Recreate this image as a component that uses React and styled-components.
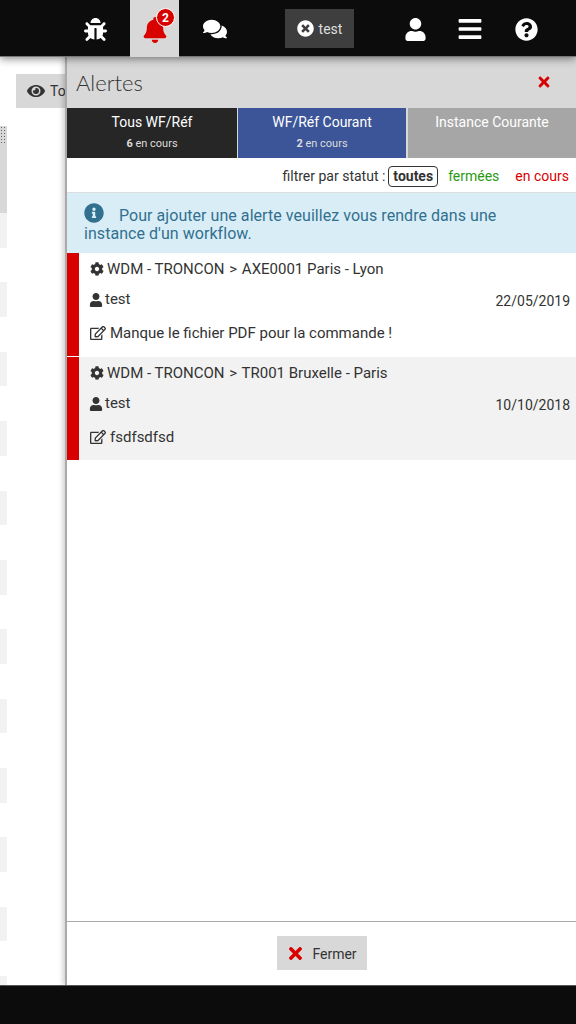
import styled, { createGlobalStyle } from "styled-components"
import { FaBars, FaBell, FaBug, FaCog, FaComments, FaEye, FaInfoCircle, FaQuestionCircle, FaRegEdit, FaTimes, FaTimesCircle, FaUser } from "react-icons/fa"

const GlobalStyle = createGlobalStyle`
  html, body {
    margin: 0;
    padding: 0;
    background: #fff;
    font-family: Roboto, "Liberation Sans", sans-serif;
    font-size: 14px;
    color: #333;
  }
  * { box-sizing: border-box; }
`

const Page = styled.div`
  width: 576px;
  height: 1024px;
  display: flex;
  flex-direction: column;
  overflow: hidden;
`
const TopBar = styled.header`
  height: 57px;
  flex: none;
  display: flex;
  padding-left: 60px;
  background: #0c0c0c;
  border-bottom: 1px solid #777;
  position: relative;
  z-index: 2;
  box-shadow: 0 2px 8px rgba(0, 0, 0, 0.45);
`
const NavItem = styled.div`
  width: ${(props) => props.$w}px;
  height: ${(props) => (props.$active ? 57 : 56)}px;
  display: flex;
  align-items: center;
  justify-content: center;
  position: relative;
  color: ${(props) => (props.$active ? "#d90000" : "#fff")};
  background: ${(props) => (props.$active ? "#d8d8d8" : "transparent")};
  font-size: ${(props) => props.$size || 23}px;
  padding-top: 2px;
`
const Badge = styled.span`
  position: absolute;
  top: 8px;
  left: 26px;
  width: 19px;
  height: 19px;
  border-radius: 50%;
  background: #d90000;
  border: 1px solid #fff;
  color: #fff;
  font-size: 12px;
  font-weight: 700;
  display: flex;
  align-items: center;
  justify-content: center;
`
const UserChip = styled.div`
  width: 69px;
  height: 39px;
  margin: 9px 31px 0 34px;
  display: flex;
  align-items: center;
  justify-content: center;
  gap: 5px;
  background: #3e3e3e;
  color: #ddd;
  font-size: 14px;
  svg { color: #fff; font-size: 17px; }
`
const Main = styled.main`
  flex: 1;
  position: relative;
  overflow: hidden;
`
const Behind = styled.div`
  padding-top: 17px;
`
const ViewButton = styled.div`
  width: 90px;
  height: 34px;
  margin-left: 16px;
  padding-left: 11px;
  display: flex;
  align-items: center;
  gap: 5px;
  background: #d8d8d8;
  font-size: 14px;
  svg { font-size: 18px; }
`
const TableHead = styled.div`
  width: 7px;
  height: 87px;
  margin-top: 18px;
  background: #d8d8d8;
`
const Grip = styled.div`
  height: 17px;
  background-image: radial-gradient(#666 0.9px, transparent 1px);
  background-size: 3px 3px;
`
const ZebraRow = styled.div`
  width: 7px;
  height: 34.7px;
  background: ${(props) => (props.$odd ? "#f2f2f2" : "#fff")};
`
const Drawer = styled.aside`
  position: absolute;
  top: 0;
  bottom: 0;
  left: 65px;
  right: 0;
  display: flex;
  flex-direction: column;
  background: #fff;
  border-left: 2px solid #aaa;
  box-shadow: -2px 0 5px rgba(0, 0, 0, 0.2);
`
const DrawerHeader = styled.div`
  height: 50px;
  flex: none;
  display: flex;
  align-items: center;
  justify-content: space-between;
  padding: 0 24px 0 9px;
  background: #d8d8d8;
  color: #d90000;
  font-size: 16px;
`
const DrawerTitle = styled.h1`
  margin: 0;
  font-family: Lato, sans-serif;
  font-size: 22px;
  font-weight: 300;
  color: #333;
`
const Tabs = styled.div`
  height: 51px;
  flex: none;
  display: grid;
  grid-template-columns: 170px 168px 1fr;
  column-gap: 1px;
  padding-top: 1px;
  background: #d8d8d8;
  & > :last-child { margin-left: 1px; }
`
const Tab = styled.div`
  height: 50px;
  padding-top: 6px;
  text-align: center;
  color: #fff;
  font-size: 14px;
  background: ${(props) => props.$bg};
`
const TabCount = styled.div`
  margin-top: 7px;
  font-size: 11px;
  line-height: 14px;
  color: #ddd;
  b { font-weight: 700; }
`
const FilterRow = styled.div`
  height: 35px;
  flex: none;
  display: flex;
  align-items: center;
  justify-content: flex-end;
  padding: 2px 2px 0 0;
  border-bottom: 1px solid #ddd;
`
const FilterLabel = styled.span`
  margin-right: 3px;
`
const FilterOption = styled.span`
  margin-left: ${(props) => props.$gap || 0}px;
  padding: 1px 4px 2px;
  font-weight: ${(props) => (props.$selected ? 700 : 400)};
  color: ${(props) => props.$color || "#333"};
  border: 1px solid ${(props) => (props.$selected ? "#333" : "transparent")};
  border-radius: 4px;
  line-height: 16px;
`
const InfoBox = styled.div`
  height: 60px;
  flex: none;
  padding: 10px 50px 10px 17px;
  background: #d9edf7;
  color: #31708f;
  font-size: 16px;
  letter-spacing: 0.05px;
  line-height: 18px;
  svg { font-size: 20px; margin-right: 15px; vertical-align: -2px; }
`
const Alert = styled.div`
  height: 103px;
  flex: none;
  display: flex;
  flex-direction: column;
  margin-bottom: 1px;
  padding-left: 11px;
  padding-right: 6px;
  border-left: 12px solid #d90000;
  background: ${(props) => (props.$grey ? "#f2f2f2" : "#fff")};
  font-size: 15px;
  svg { color: #333; }
`
const AlertPath = styled.div`
  display: flex;
  align-items: center;
  gap: 3px;
  height: 31px;
  white-space: nowrap;
  svg { font-size: 14px; }
`
const PathSeparator = styled.span`
  margin: 0 1px;
`
const AlertMeta = styled.div`
  display: flex;
  justify-content: space-between;
  height: 34px;
  padding-top: 6px;
`
const AlertUser = styled.div`
  display: flex;
  gap: 2px;
  align-items: flex-start;
  margin-left: -1px;
  svg { font-size: 14px; margin-top: 3px; }
`
const AlertDate = styled.div`
  padding-top: 3px;
  font-size: 14px;
`
const AlertText = styled.div`
  display: flex;
  align-items: center;
  gap: 4px;
  padding-top: 6px;
  svg { font-size: 16px; }
`
const Spacer = styled.div`
  flex: 1;
`
const DrawerFooter = styled.div`
  height: 64px;
  flex: none;
  display: flex;
  justify-content: center;
  padding-top: 14px;
  border-top: 1px solid #aaa;
`
const CloseButton = styled.button`
  width: 90px;
  height: 34px;
  display: flex;
  align-items: center;
  justify-content: center;
  gap: 7px;
  padding: 1px 0 0;
  border: 0;
  background: #d8d8d8;
  color: #333;
  font: inherit;
  svg { color: #d90000; font-size: 19px; }
`
const BottomBar = styled.footer`
  height: 39px;
  flex: none;
  background: #0c0c0c;
  border-top: 1px solid #555;
  position: relative;
`

const alerts = [
  { path: "AXE0001 Paris - Lyon", date: "22/05/2019", text: "Manque le fichier PDF pour la commande !" },
  { path: "TR001 Bruxelle - Paris", date: "10/10/2018", text: "fsdfsdfsd", grey: true },
]

const App = () => {
  return (
    <Page>
      <GlobalStyle />
      <TopBar>
        <NavItem $w={70}><FaBug /></NavItem>
        <NavItem $w={49} $active $size={26}>
          <FaBell />
          <Badge>2</Badge>
        </NavItem>
        <NavItem $w={72} $size={24}><FaComments /></NavItem>
        <UserChip><FaTimesCircle /> test</UserChip>
        <NavItem $w={60}><FaUser /></NavItem>
        <NavItem $w={50} $size={26}><FaBars /></NavItem>
        <NavItem $w={62}><FaQuestionCircle /></NavItem>
      </TopBar>
      <Main>
        <Behind>
          <ViewButton><FaEye /> To</ViewButton>
          <TableHead><Grip /></TableHead>
          {Array.from({ length: 24 }, (_, i) => <ZebraRow key={i} $odd={i % 2 === 0} />)}
        </Behind>
        <Drawer>
          <DrawerHeader>
            <DrawerTitle>Alertes</DrawerTitle>
            <FaTimes />
          </DrawerHeader>
          <Tabs>
            <Tab $bg="#262626">Tous WF/Réf<TabCount><b>6</b> en cours</TabCount></Tab>
            <Tab $bg="#3b5598">WF/Réf Courant<TabCount><b>2</b> en cours</TabCount></Tab>
            <Tab $bg="#a6a6a6">Instance Courante</Tab>
          </Tabs>
          <FilterRow>
            <FilterLabel>filtrer par statut :</FilterLabel>
            <FilterOption $selected>toutes</FilterOption>
            <FilterOption $color="#2a9a12" $gap={5}>fermées</FilterOption>
            <FilterOption $color="#d90000" $gap={6}>en cours</FilterOption>
          </FilterRow>
          <InfoBox>
            <FaInfoCircle />Pour ajouter une alerte veuillez vous rendre dans une instance d'un workflow.
          </InfoBox>
          {alerts.map((alert) => (
            <Alert key={alert.path} $grey={alert.grey}>
              <AlertPath>
                <FaCog />
                <span>WDM - TRONCON <PathSeparator>&gt;</PathSeparator> {alert.path}</span>
              </AlertPath>
              <AlertMeta>
                <AlertUser><FaUser /> test</AlertUser>
                <AlertDate>{alert.date}</AlertDate>
              </AlertMeta>
              <AlertText><FaRegEdit /> {alert.text}</AlertText>
            </Alert>
          ))}
          <Spacer />
          <DrawerFooter>
            <CloseButton><FaTimes /> Fermer</CloseButton>
          </DrawerFooter>
        </Drawer>
      </Main>
      <BottomBar />
    </Page>
  )
}

export default App
